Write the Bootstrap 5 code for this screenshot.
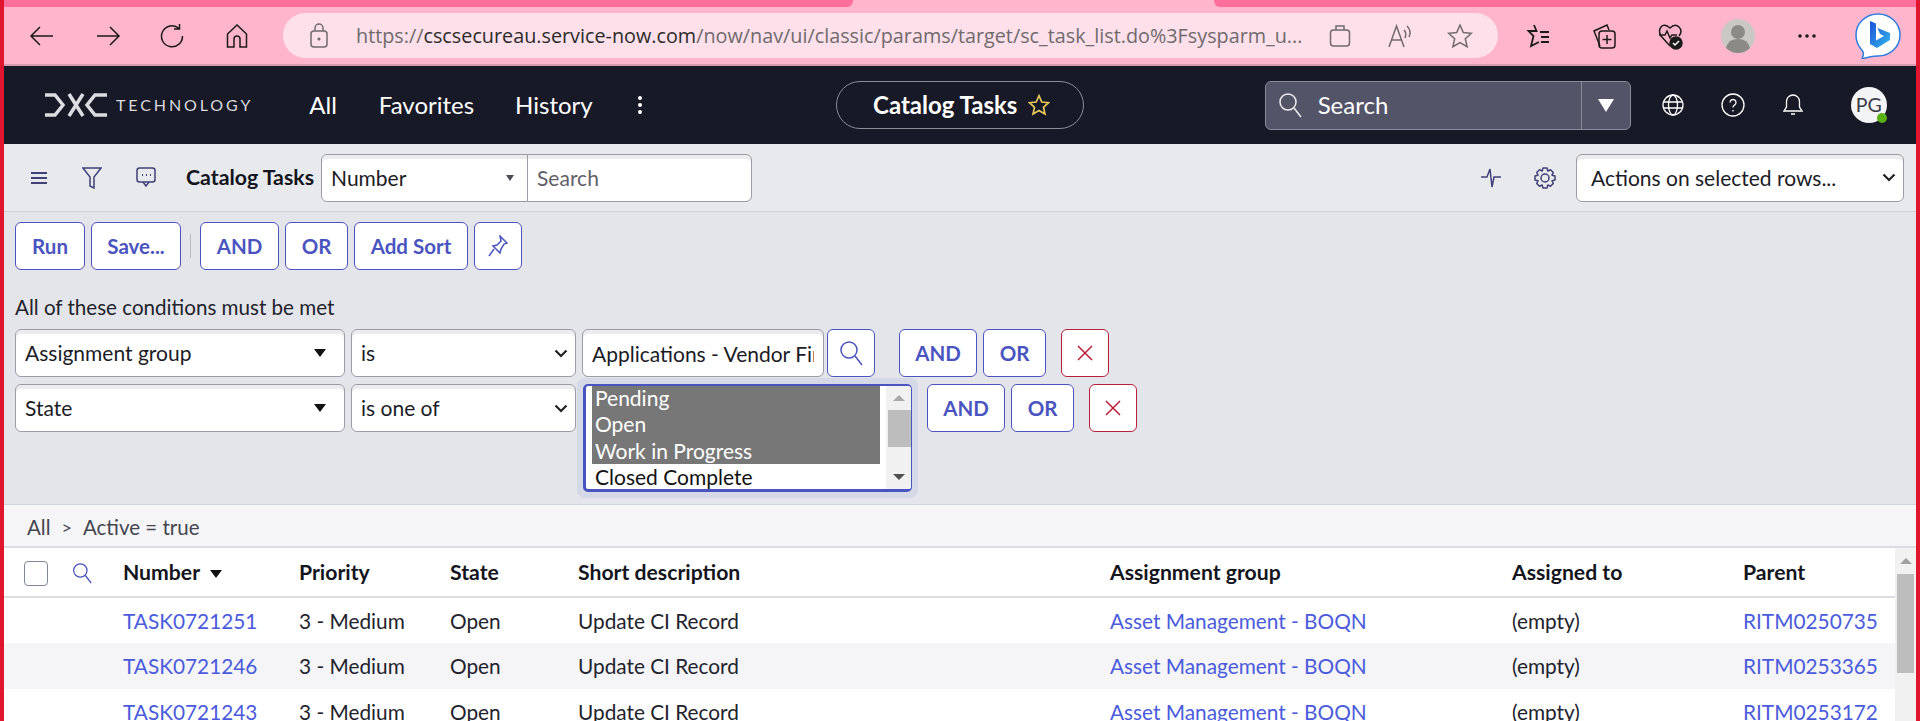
<!DOCTYPE html>
<html lang="en">
<head>
  <meta charset="UTF-8" />
  <meta name="viewport" content="width=device-width, initial-scale=1.0"/>
  <title>Catalog Tasks</title>
  <link href="https://cdn.jsdelivr.net/npm/bootstrap@5.3.3/dist/css/bootstrap.min.css" rel="stylesheet">
  <style>
    html, body { height: 721px; overflow: hidden; }
    body { font-family: Lato, sans-serif; font-size: 21px; color: #1b1c26; background: #fff; }
    .frame { height: 721px; border-left: 4px solid #e2152f; border-right: 4px solid #e2152f; overflow: hidden; }

    /* small spacing helpers */
    .ml-n3 { margin-left: -3px; } .ml-7 { margin-left: 7px; } .ml-9 { margin-left: 9px; } .ml-12 { margin-left: 12px; } .ml-18 { margin-left: 18px; }
    .ml-25 { margin-left: 25px; } .ml-27 { margin-left: 27px; } .ml-30 { margin-left: 30px; } .ml-31 { margin-left: 31px; } .ml-32 { margin-left: 32px; }
    .ml-34 { margin-left: 34px; } .ml-35 { margin-left: 35px; } .ml-37 { margin-left: 37px; } .ml-38 { margin-left: 38px; } .ml-39 { margin-left: 39px; }
    .ml-40 { margin-left: 40px; } .ml-41 { margin-left: 41px; } .ml-42 { margin-left: 42px; } .ml-44 { margin-left: 44px; } .ml-48 { margin-left: 48px; }
    .ml-56 { margin-left: 56px; } .ml-181 { margin-left: 181px; } .ml-193 { margin-left: 193px; }

    /* browser chrome */
    .tabstrip { height: 7px; background: #ffb6cd; }
    .tabstrip div { background: #ff6f9c; height: 7px; }
    .tab-a { width: 849px; border-bottom-right-radius: 6px; }
    .tab-b { flex: 1; margin-left: 361px; border-bottom-left-radius: 6px; }
    .chrome { height: 59px; background: #ffb6cd; border-bottom: 2px solid #d69db0; }
    .chrome svg { flex: none; fill: none; stroke: #1a1a1a; stroke-width: 1.5; }
    .addr { width: 1215px; height: 45px; margin-left: 33px; padding: 0 25px 0 24px; background: #fde0ea; border-radius: 23px; font-family: "Open Sans", sans-serif; font-size: 19.8px; color: #6f6a6d; white-space: nowrap; }
    .addr b { font-weight: 400; color: #2b2b2b; }
    .addr svg { stroke: #6f6a6d; }
    .addr-url { margin-left: 25px; }

    /* service-now header */
    .topnav { height: 78px; background: #181926; color: #fff; }
    .topnav svg { flex: none; }
    .dxc-word { font-size: 16px; letter-spacing: 2.9px; color: #d9dadd; }
    .topnav-link { font-size: 24px; color: #fff; text-decoration: none; }
    .pill { width: 248px; height: 48px; padding-left: 4px; column-gap: 11px; border: 1px solid #8b8c96; border-radius: 24px; font-size: 24px; font-weight: 700; }
    .gsearch { width: 366px; height: 49px; background: #545469; border: 1px solid #8b8c99; border-radius: 6px; font-size: 24px; }
    .gsearch-drop { width: 49px; border-left: 1px solid #8b8c99; }
    .avatar { position: relative; width: 36px; height: 36px; border-radius: 50%; background: #f3f4f6; color: #3a3b46; font-size: 19.5px; }
    .avatar i { position: absolute; right: 0; bottom: 0; width: 10px; height: 10px; background: #5bb011; border-radius: 50%; }

    /* list toolbar */
    .listbar { height: 68px; background: #e8e9ed; border-bottom: 1px solid #cfd1d8; }
    .listbar svg, .filter-zone svg, .thead-ico { fill: none; stroke: #3f4178; stroke-width: 1.5; flex: none; }
    .list-title { font-size: 21.3px; font-weight: 700; color: #14151d; }
    .list-search.input-group { width: 431px; }
    .list-search.input-group > select { width: 207px; flex: none; }
    .sn-field.form-select, .sn-field.form-control {
      height: 48px; padding: 0 9px; font-size: 21px; line-height: 46px; color: #1b1c26;
      border: 1px solid #9a9ca8; border-radius: 6px; box-shadow: inset 0 4px 0 #ececee;
    }
    .sn-field.form-select { background-image: url("data:image/svg+xml,%3Csvg xmlns='http://www.w3.org/2000/svg' viewBox='0 0 14 9'%3E%3Cpath d='M1.500 1.500 7 7l5.500-5.500' fill='none' stroke='%23222' stroke-width='2.200'/%3E%3C/svg%3E"); background-size: 14px 9px; background-position: right 7px center; padding-right: 30px; }
    .sn-field.form-control::placeholder { color: #5f6069; opacity: 1; }
    .sn-field.field-tri.form-select { background-image: url("data:image/svg+xml,%3Csvg xmlns='http://www.w3.org/2000/svg' viewBox='0 0 12 8'%3E%3Cpath d='M0 0h12L6 8z' fill='%23111'/%3E%3C/svg%3E"); background-size: 12px 8px; background-position: right 18px center; }
    .sn-field.field-mini.form-select { background-image: url("data:image/svg+xml,%3Csvg xmlns='http://www.w3.org/2000/svg' viewBox='0 0 8 6'%3E%3Cpath d='M0 0h8L4 6z' fill='%234a4b55'/%3E%3C/svg%3E"); background-size: 8px 6px; background-position: right 13px center; }
    .sn-field.actions-pick.form-select { width: 328px; margin: 0 12px 0 19px; padding-left: 14px; }

    /* filter zone */
    .filter-zone { height: 293px; background: #e4e5ea; border-bottom: 1px solid #d2d4dc; padding: 10px 0 0 11px; }
    .filter-row { column-gap: 6px; }
    .filter-row-first { margin-bottom: 7px; }
    .filter-sep { width: 1px; height: 24px; background: #b8bac2; margin: 0 3px; }
    .sn-btn.btn { height: 48px; padding: 0; font-size: 20.5px; font-weight: 700; color: #4a54c0; background: #fff; border: 1px solid #4a54c0; border-radius: 6px; display: inline-flex; align-items: center; justify-content: center; }
    .sn-btn svg { stroke: #4a54c0; }
    .btn-del.btn { border-color: #b8203a; }
    .btn-del svg { stroke: #b8203a; }
    .w-run { width: 70px; } .w-save { width: 90px; } .w-and { width: 79px; } .w-and2 { width: 78px; } .w-or { width: 63px; } .w-sort { width: 114px; } .w-sq { width: 48px; }
    .cond-note { font-size: 20.6px; height: 26px; line-height: 26px; margin-top: 24px; margin-bottom: 9px; color: #22232c; }
    .w-field { width: 330px; } .w-op { width: 225px; } .w-val { width: 242px; }
    .multi-ring { margin: -6px -6px -6px -5px; padding: 6px; background: #d5d8e6; border-radius: 8px; z-index: 1; }
    .multi { width: 329px; height: 108px; border: 3px solid #4a54c0; border-right: 1px solid #4a54c0; border-top-width: 2px; border-radius: 5px; background: #fff; overflow: hidden; }
    .multi-opts { width: 300px; margin-top: -1px; padding: 0 6px; font-size: 21px; line-height: 26.3px; color: #111; white-space: nowrap; }
    .multi-opt-on { background: #777; color: #fff; padding-left: 3px; }
    .multi-opt-off { padding-left: 3px; }
    .fake-scroll { position: relative; background: #f1f1f1; }
    .multi-track { width: 25px; height: 100%; margin-left: auto; }
    .multi-thumb { position: absolute; left: 2px; right: 0; top: 24px; height: 37px; background: #bdbdbd; }
    .tri-up, .tri-down { position: absolute; left: 50%; margin-left: -6px; width: 0; height: 0; border-left: 6px solid transparent; border-right: 6px solid transparent; }
    .tri-up { top: 9px; border-bottom: 6px solid #a8a8a8; }
    .tri-down { bottom: 9px; border-top: 6px solid #505050; }

    /* breadcrumb + table */
    .crumbs { height: 43px; column-gap: 11px; background: #f5f5f8; border-bottom: 2px solid #dcdde3; padding: 3px 0 0 23px; font-size: 20.5px; color: #44454f; }
    .crumb-sep { font-size: 18px; }
    .tbl-wrap { height: 173px; overflow: hidden; }
    .sn-table.table { table-layout: fixed; width: 1891px; margin: 0; font-size: 20.8px; color: #22232c; --bs-table-border-color: transparent; }
    .sn-table.table > * > * > * { padding: 0; vertical-align: middle; white-space: nowrap; border: 0; }
    .sn-table thead tr { height: 49px; }
    .sn-table.table > thead > tr > th { padding-top: 2px; font-size: 21.2px; font-weight: 700; color: #14151d; border-bottom: 2px solid #dcdde3; }
    .sn-table tbody tr { height: 46px; }
    .sn-table tbody tr.stripe td { background: #f5f5f8; }
    .sn-table a { color: #4a5bdc; text-decoration: none; }
    .sn-check { width: 24px; height: 25px; margin-left: 20px; border: 1px solid #83859a; border-radius: 4px; background: #fff; }
    .thead-ico { margin-left: 24px; stroke: #4a54c0; }
    .sort-tri { margin: 0 0 2px 5px; }
    .c1 { width: 119px; } .c2 { width: 176px; } .c3 { width: 151px; } .c4 { width: 128px; } .c5 { width: 532px; } .c6 { width: 402px; } .c7 { width: 231px; }
    .tbl-scroll { flex: none; width: 21px; height: 173px; }
    .tbl-thumb { position: absolute; left: 2px; right: 2px; top: 26px; height: 99px; background: #bdbdbd; }
    .tbl-scroll .tri-up { top: 10px; border-bottom-color: #a0a0a0; }
  </style>
</head>
<body>
<div class="frame">
  <div class="tabstrip d-flex"><div class="tab-a"></div><div class="tab-b"></div></div>

  <div class="chrome d-flex align-items-center">
    <svg class="ms-4" width="28" height="24" viewBox="0 0 28 24"><path d="M25 12H3M12 3l-9 9 9 9"/></svg>
    <svg class="ml-38" width="28" height="24" viewBox="0 0 28 24"><path d="M3 12h22M16 3l9 9-9 9"/></svg>
    <svg class="ml-37" width="26" height="26" viewBox="0 0 26 26"><path d="M20 5.500A10.500 10.500 0 1 0 23.500 13M20.500 1v5h-5.500"/></svg>
    <svg class="ml-39" width="26" height="26" viewBox="0 0 26 26"><path d="M13 2 3.500 11v13h6.500v-8a3 3 0 0 1 6 0v8h6.500V11z"/></svg>
    <div class="addr d-flex align-items-center">
      <svg width="24" height="26" viewBox="0 0 24 26"><rect x="4" y="8" width="16" height="16" rx="3"/><path d="M8 8V5a4 4 0 0 1 8 0v3"/><circle cx="12" cy="16" r=".8"/></svg>
      <span class="addr-url">https://<b>cscsecureau.service-now.com</b>/now/nav/ui/classic/params/target/sc_task_list.do%3Fsysparm_u...</span>
      <svg class="ms-auto" width="24" height="26" viewBox="0 0 24 26"><rect x="2.500" y="7" width="19" height="16" rx="3"/><path d="M8 7V3h8v4"/></svg>
      <svg class="ml-35" width="26" height="26" viewBox="0 0 26 26"><path d="M2 24 9.500 3l7.500 21M5 17h9M17 7q3 3 1 8M20 3q5 5 2 11"/></svg>
      <svg class="ml-34" width="26" height="26" viewBox="0 0 26 26"><path d="m13 2 3.300 7.500 8 .8-6 5.400 1.800 8L13 19.500 5.900 23.700l1.800-8-6-5.400 8-.8z"/></svg>
    </div>
    <svg class="ml-27" width="26" height="26" viewBox="0 0 26 26"><path d="m9 2 2.500 6h-8l5 5L6 23l8-4M15 9h9M16 14h8M16 19h8" stroke-width="1.800"/></svg>
    <svg class="ml-40" width="26" height="28" viewBox="0 0 26 28"><path d="M9 24 3 9l13-6 2 5"/><rect x="8" y="9" width="16" height="17" rx="3"/><path d="M16 13v9M11.500 17.500h9"/></svg>
    <svg class="ml-40" width="26" height="28" viewBox="0 0 26 28"><path d="M13 24 4 14Q1 9 4 5t9 1q5-5 9-1t0 9M2 13h6l2-4 3 7 2-3h5"/><circle cx="19" cy="21" r="6" fill="#1a1a1a"/><path d="m16 21 2 2 4-4" stroke="#fff"/></svg>
    <svg class="ml-38" width="34" height="34" viewBox="0 0 34 34"><circle cx="17" cy="17" r="17" fill="#c9c8c5" stroke="none"/><circle cx="17" cy="13" r="7" fill="#8b8a87" stroke="none"/><path d="M5 29q2-9 12-9t12 9q-5 5-12 5T5 29" fill="#8b8a87" stroke="none"/></svg>
    <svg class="ml-42" width="20" height="6" viewBox="0 0 20 6"><g fill="#1a1a1a" stroke="none"><circle cx="3" cy="3" r="1.800"/><circle cx="10" cy="3" r="1.800"/><circle cx="17" cy="3" r="1.800"/></g></svg>
    <svg class="ml-38" width="46" height="46" viewBox="0 0 46 46">
      <defs><linearGradient id="bingfill" x1="0" y1="0" x2="1" y2="1"><stop offset="0" stop-color="#1b4fd8"/><stop offset="1" stop-color="#35b8ea"/></linearGradient></defs>
      <path d="M23 1c12 0 22 9 22 21S35 43 23 43q-7 0-16 3c2-5 2-7-1-10Q1 30 1 22C1 10 11 1 23 1" fill="#fff" stroke="#2a7de1" stroke-width="1.500"/>
      <path d="M15 8l6 2.500v17l8-4.500-4-2-2.500-6L35 20v7l-13 8-7-4z" fill="url(#bingfill)" stroke="none"/>
    </svg>
  </div>

  <nav class="topnav d-flex align-items-center">
    <svg class="ml-41" width="62" height="24" viewBox="0 0 62 24" fill="none" stroke="#dcdde0" stroke-width="3.500"><path d="M0 2h10l8 10-8 10H0M24 1l14 22M38 1 24 23M62 2H50l-8 10 8 10h12"/></svg>
    <span class="dxc-word ml-9">TECHNOLOGY</span>
    <a class="topnav-link ml-56" href="#">All</a>
    <a class="topnav-link ml-42" href="#">Favorites</a>
    <a class="topnav-link ml-41" href="#">History</a>
    <svg class="ml-44" width="6" height="20" viewBox="0 0 6 20" fill="#fff"><circle cx="3" cy="3" r="2"/><circle cx="3" cy="10" r="2"/><circle cx="3" cy="17" r="2"/></svg>
    <div class="pill d-flex align-items-center justify-content-center ml-193">Catalog Tasks
      <svg width="22" height="22" viewBox="0 0 26 26" fill="none" stroke="#e6c65c" stroke-width="2"><path d="m13 2 3.300 7.500 8 .8-6 5.400 1.800 8L13 19.500 5.900 23.700l1.800-8-6-5.400 8-.8z"/></svg>
    </div>
    <div class="gsearch d-flex align-items-stretch ml-181">
      <div class="d-flex flex-grow-1 align-items-center">
        <svg class="ml-12 me-2" width="24" height="26" viewBox="0 0 24 26" fill="none" stroke="#eee" stroke-width="1.500"><circle cx="10" cy="10" r="8"/><path d="m16 16 7 9"/></svg>
        <span class="ms-2">Search</span>
      </div>
      <div class="gsearch-drop d-flex align-items-center justify-content-center">
        <svg width="16" height="13" viewBox="0 0 16 13"><path d="M0 0h16L8 13z" fill="#fff"/></svg>
      </div>
    </div>
    <svg class="ml-31" width="22" height="22" viewBox="0 0 22 22" fill="none" stroke="#fff" stroke-width="1.300"><circle cx="11" cy="11" r="10"/><ellipse cx="11" cy="11" rx="4.500" ry="10"/><path d="M1 8h20M1 14h20"/></svg>
    <svg class="ml-37" width="24" height="24" viewBox="0 0 24 24" fill="none" stroke="#fff" stroke-width="1.300"><circle cx="12" cy="12" r="11"/><path d="M9 9.500a3 3 0 1 1 4.500 2.600q-1.500.9-1.500 2.400M12 17v1.500"/></svg>
    <svg class="ml-38" width="20" height="24" viewBox="0 0 20 24" fill="none" stroke="#fff" stroke-width="1.300"><path d="M10 2a6.500 6.500 0 0 0-6.500 6.500V14L1 18h18l-2.500-4V8.500A6.500 6.500 0 0 0 10 2M8 21h4"/></svg>
    <div class="avatar d-flex align-items-center justify-content-center ml-48">PG<i></i></div>
  </nav>

  <div class="listbar d-flex align-items-center">
    <svg class="ml-27" width="16" height="14" viewBox="0 0 16 14"><path d="M0 2h16M0 7h16M0 12h16" stroke-width="2"/></svg>
    <svg class="ml-35" width="20" height="22" viewBox="0 0 20 22"><path d="M1 1h18l-7 9v11l-4-2v-9z"/></svg>
    <svg class="ml-34" width="20" height="22" viewBox="0 0 20 22"><rect x="1" y="1" width="18" height="14" rx="2.500"/><path d="M7 15l3 4 3-4"/><path d="M6 8h1M10 8h1M14 8h1" stroke-width="2"/></svg>
    <span class="list-title ml-30">Catalog Tasks</span>
    <div class="input-group flex-nowrap list-search ml-7">
      <select class="form-select sn-field field-mini"><option>Number</option></select>
      <input class="form-control sn-field" type="text" placeholder="Search">
    </div>
    <svg class="ms-auto" width="20" height="20" viewBox="0 0 20 20"><path d="M0 9h6l3-8 2 18 2-10h7"/></svg>
    <svg class="ml-32" width="24" height="24" viewBox="0 0 24 24"><circle cx="12" cy="12" r="4"/><path d="M10 2h4l.8 3 2.700-1.200L20.300 6.500 19 9.200l3 .8v4l-3 .8 1.300 2.700-2.800 2.700-2.700-1.200-.8 3h-4l-.8-3-2.700 1.200-2.800-2.700L5 14.800 2 14v-4l3-.8-1.300-2.700 2.800-2.700 2.700 1.200z" stroke-linejoin="round"/></svg>
    <select class="form-select sn-field actions-pick"><option>Actions on selected rows...</option></select>
  </div>

  <div class="filter-zone">
    <div class="d-flex align-items-center filter-row">
      <button class="btn sn-btn w-run">Run</button>
      <button class="btn sn-btn w-save">Save...</button>
      <div class="filter-sep"></div>
      <button class="btn sn-btn w-and">AND</button>
      <button class="btn sn-btn w-or">OR</button>
      <button class="btn sn-btn w-sort">Add Sort</button>
      <button class="btn sn-btn w-sq">
        <svg width="20" height="22" viewBox="0 0 20 22"><path d="M12 1l7 7-3 1-3 5-1 4-7-7 4-1 4-4zM6 14l-5 7"/></svg>
      </button>
    </div>
    <div class="cond-note">All of these conditions must be met</div>

    <div class="d-flex filter-row filter-row-first">
      <select class="form-select sn-field field-tri w-field"><option>Assignment group</option></select>
      <select class="form-select sn-field w-op"><option>is</option></select>
      <input class="form-control sn-field w-val" type="text" value="Applications - Vendor Fir">
      <button class="btn sn-btn w-sq ml-n3">
        <svg width="24" height="26" viewBox="0 0 24 26"><circle cx="10" cy="10" r="8"/><path d="m16 16 7 9"/></svg>
      </button>
      <button class="btn sn-btn w-and2 ml-18">AND</button>
      <button class="btn sn-btn w-or">OR</button>
      <button class="btn sn-btn btn-del w-sq ml-9">
        <svg width="16" height="16" viewBox="0 0 16 16"><path d="M1 1l14 14M15 1 1 15"/></svg>
      </button>
    </div>

    <div class="d-flex align-items-start filter-row">
      <select class="form-select sn-field field-tri w-field"><option>State</option></select>
      <select class="form-select sn-field w-op"><option>is one of</option></select>
      <div class="multi-ring">
        <div class="multi d-flex">
          <div class="multi-opts">
            <div class="multi-opt-on">Pending</div>
            <div class="multi-opt-on">Open</div>
            <div class="multi-opt-on">Work in Progress</div>
            <div class="multi-opt-off">Closed Complete</div>
          </div>
          <div class="fake-scroll multi-track"><span class="tri-up"></span><span class="multi-thumb"></span><span class="tri-down"></span></div>
        </div>
      </div>
      <button class="btn sn-btn w-and2 ml-9">AND</button>
      <button class="btn sn-btn w-or">OR</button>
      <button class="btn sn-btn btn-del w-sq ml-9">
        <svg width="16" height="16" viewBox="0 0 16 16"><path d="M1 1l14 14M15 1 1 15"/></svg>
      </button>
    </div>
  </div>

  <div class="crumbs d-flex align-items-center">All <span class="crumb-sep">&gt;</span> Active = true</div>

  <div class="tbl-wrap d-flex">
    <table class="table sn-table">
      <colgroup>
        <col class="c1"><col class="c2"><col class="c3"><col class="c4"><col class="c5"><col class="c6"><col class="c7"><col>
      </colgroup>
      <thead>
        <tr>
          <th>
            <div class="d-flex align-items-center">
              <div class="sn-check"></div>
              <svg class="thead-ico" width="20" height="22" viewBox="0 0 24 26"><circle cx="10" cy="10" r="8"/><path d="m16 16 7 9"/></svg>
            </div>
          </th>
          <th>Number <svg class="sort-tri" width="12" height="8" viewBox="0 0 12 8"><path d="M0 0h12L6 8z" fill="#111"/></svg></th>
          <th>Priority</th><th>State</th><th>Short description</th><th>Assignment group</th><th>Assigned to</th><th>Parent</th>
        </tr>
      </thead>
      <tbody>
        <tr><td></td><td><a href="#">TASK0721251</a></td><td>3 - Medium</td><td>Open</td><td>Update CI Record</td><td><a href="#">Asset Management - BOQN</a></td><td>(empty)</td><td><a href="#">RITM0250735</a></td></tr>
        <tr class="stripe"><td></td><td><a href="#">TASK0721246</a></td><td>3 - Medium</td><td>Open</td><td>Update CI Record</td><td><a href="#">Asset Management - BOQN</a></td><td>(empty)</td><td><a href="#">RITM0253365</a></td></tr>
        <tr><td></td><td><a href="#">TASK0721243</a></td><td>3 - Medium</td><td>Open</td><td>Update CI Record</td><td><a href="#">Asset Management - BOQN</a></td><td>(empty)</td><td><a href="#">RITM0253172</a></td></tr>
      </tbody>
    </table>
    <div class="fake-scroll tbl-scroll"><span class="tri-up"></span><span class="tbl-thumb"></span></div>
  </div>
</div>
<script src="https://cdn.jsdelivr.net/npm/bootstrap@5.3.3/dist/js/bootstrap.bundle.min.js"></script>
</body>
</html>
